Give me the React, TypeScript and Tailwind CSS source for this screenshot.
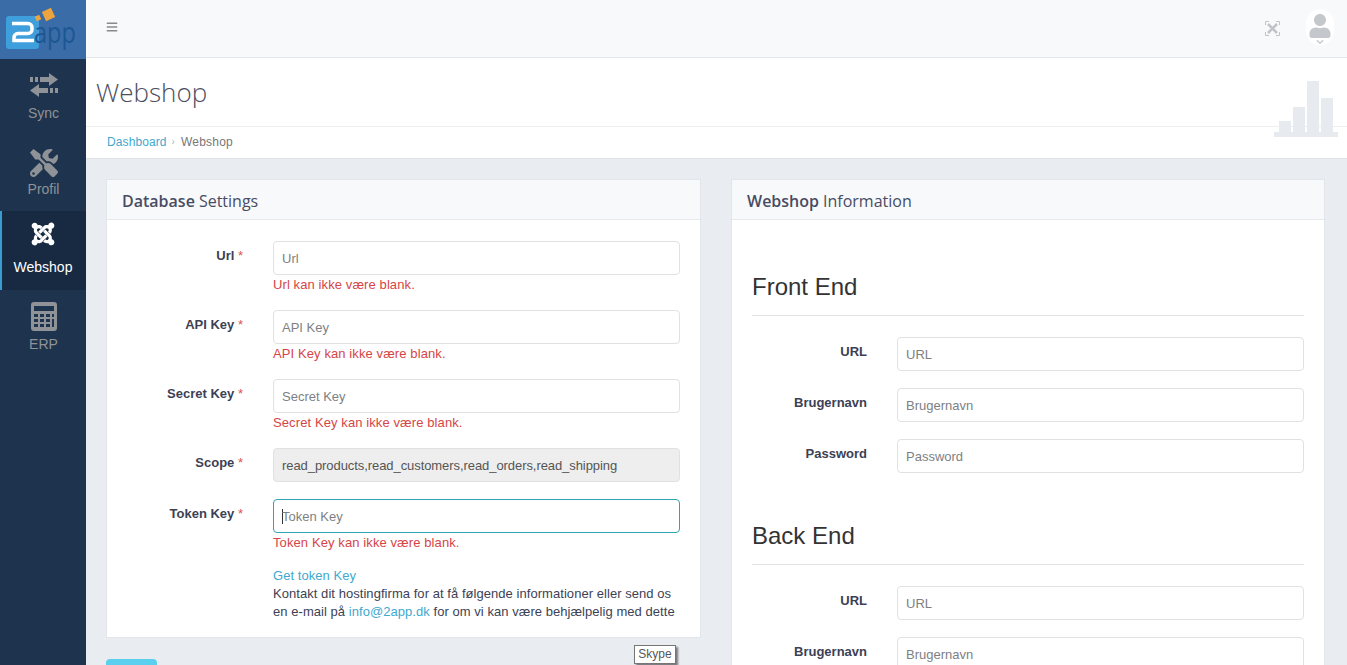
import React from "react";
import { FaBars, FaChevronDown, FaJoomla, FaTools, FaUser } from "react-icons/fa";

const arial = "font-['Liberation_Sans',Arial,sans-serif]";
const open = "font-['Open_Sans',sans-serif]";

function SyncIcon() {
  return (
    <svg width="28" height="26" viewBox="0 0 28 26" fill="#8f9296">
      <rect x="0" y="5" width="3" height="5" />
      <rect x="5" y="5" width="3" height="5" />
      <path d="M10 5h9V1l9 6.500-9 6.500v-4h-9z" />
      <rect x="25" y="16" width="3" height="5" />
      <rect x="20" y="16" width="3" height="5" />
      <path d="M18 16H9v-4l-9 6.500L9 25v-4h9z" />
    </svg>
  );
}

function CalcIcon() {
  return (
    <svg width="26" height="29" viewBox="0 0 26 29" fill="#8f9296">
      <path fillRule="evenodd" d="M3 0h20a3 3 0 0 1 3 3v23a3 3 0 0 1-3 3H3a3 3 0 0 1-3-3V3a3 3 0 0 1 3-3zM3 4v5h20V4zM3 12v3h4v-3zM9 12v3h4v-3zM15 12v3h4v-3zM21 12v3h2v-3zM3 17v3h4v-3zM9 17v3h4v-3zM15 17v3h4v-3zM21 17v8h2v-8zM3 22v3h4v-3zM9 22v3h4v-3zM15 22v3h4v-3z" />
    </svg>
  );
}

function Logo() {
  return (
    <svg width="86" height="59" viewBox="0 0 86 59">
      <rect x="6" y="16" width="33" height="33" rx="3" fill="#3f9fdc" />
      <path d="M12 23.500h16a4 4 0 0 1 4 4v2a4 4 0 0 1-4 4H18a4 4 0 0 0-4 4v3h20" fill="none" stroke="#fff" strokeWidth="3.500" />
      <rect x="35.500" y="15.500" width="5" height="5" fill="#eda33e" transform="rotate(-25 38 18)" />
      <rect x="43.500" y="9.500" width="10" height="10" fill="#eda33e" transform="rotate(-25 48.500 14.500)" />
      <text x="34" y="43" fontFamily="'Open Sans',sans-serif" fontSize="29" textLength="42" lengthAdjust="spacingAndGlyphs" fill="#1d5793">app</text>
    </svg>
  );
}

function FullscreenIcon() {
  return (
    <svg width="15" height="15" viewBox="0 0 15 15" fill="none" stroke="#c0c3c7">
      <path d="M.500 4V.500H4M11 .500h3.500V4M14.500 11v3.500H11M4 14.500H.500V11" />
      <path d="M3 3l9 9M12 3l-9 9" strokeWidth="2.500" />
    </svg>
  );
}

function NavItem({ label, icon, active }: { label: string; icon: React.ReactNode; active?: boolean }) {
  return (
    <div
      className={
        active
          ? "h-[79px] flex flex-col items-center pt-[7px] pr-[2px] bg-[#172a42] border-l-2 border-[#3a9bd0] text-white"
          : "h-[76px] flex flex-col items-center pt-[10px] pl-[1px] text-[#8f9296]"
      }
    >
      <div className="h-[32px] flex items-center justify-center">{icon}</div>
      <span className={active ? `${arial} text-[14px] leading-[20px] mt-[7px]` : `${arial} text-[14px] leading-[20px] mt-[2px]`}>
        {label}
      </span>
    </div>
  );
}

function Field({
  label,
  placeholder,
  error,
  readOnly,
  focused,
}: {
  label: string;
  placeholder: string;
  error?: boolean;
  readOnly?: boolean;
  focused?: boolean;
}) {
  return (
    <div className="flex">
      <div className="w-[136px] shrink-0 text-right pt-[6px] text-[13px] leading-[17px] font-bold text-[#3d3f55]">
        {label} <span className="text-[#d9534f] font-normal">*</span>
      </div>
      <div className="ml-[30px] w-[407px]">
        <div
          className={
            readOnly
              ? "h-[34px] border border-[#dfe1e5] rounded-[4px] bg-[#eeeeee] px-[8px] pt-[1px] flex items-center text-[13px] tracking-[-0.07px] text-[#555555]"
              : focused
                ? "h-[34px] border border-[#2fa4b5] rounded-[4px] bg-white px-[8px] pt-[1px] flex items-center text-[13px] text-[#7d7f84]"
                : "h-[34px] border border-[#dfe1e5] rounded-[4px] bg-white px-[8px] pt-[1px] flex items-center text-[13px] text-[#7d7f84]"
          }
        >
          {focused && <span className="w-px h-[15px] bg-[#333333] -mr-px" />}
          {placeholder}
        </div>
        {error && (
          <div className="mt-[1px] h-[17px] text-[13px] leading-[17px] tracking-[0.1px] text-[#d64545]">
            {label} kan ikke være blank.
          </div>
        )}
      </div>
    </div>
  );
}

function InfoField({ label }: { label: string }) {
  return (
    <div className="flex">
      <div className="w-[115px] shrink-0 text-right pt-[6px] text-[13px] leading-[17px] font-bold text-[#3d3f55]">
        {label}
      </div>
      <div className="ml-[30px] w-[407px] h-[34px] shrink-0 border border-[#dfe1e5] rounded-[4px] bg-white px-[8px] pt-[1px] flex items-center text-[13px] text-[#7d7f84]">
        {label}
      </div>
    </div>
  );
}

function PanelHeader({ strong, rest }: { strong: string; rest: string }) {
  return (
    <div className={`${open} h-[40px] pl-[15px] pt-[2px] bg-[#f8f9fb] border-b border-[#e6e9ee] flex items-center text-[16px] text-[#484c63]`}>
      <span className="font-semibold mr-[4px]">{strong}</span>
      {rest}
    </div>
  );
}

export default function App() {
  return (
    <div className={`${arial} h-[665px] overflow-hidden flex bg-[#e9edf2]`}>
      <aside className="w-[86px] shrink-0 bg-[#1e344e]">
        <div className="h-[59px] bg-[#3a6ca8] overflow-hidden">
          <Logo />
        </div>
        <NavItem label="Sync" icon={<SyncIcon />} />
        <NavItem label="Profil" icon={<FaTools size={28} color="#8f9296" className="mt-[4px]" />} />
        <NavItem label="Webshop" active icon={<FaJoomla size={26} color="#ffffff" />} />
        <NavItem label="ERP" icon={<CalcIcon />} />
      </aside>

      <main className="flex-1 min-w-0">
        <header className="h-[58px] bg-[#f7f9fb] border-b border-[#e4e7eb] flex items-center pl-[20px] pr-[13px]">
          <FaBars size={12} color="#8a8a8a" className="mb-[4px]" />
          <div className="ml-auto flex items-center gap-[26px]">
            <FullscreenIcon />
            <div className="w-[28px] h-[36px] mt-[-4px] rounded-full bg-white flex flex-col items-center relative">
              <FaUser size={24} color="#c4c7cb" className="mt-[5px]" />
              <FaChevronDown size={8} color="#c4c7cb" className="absolute top-[29px]" />
            </div>
          </div>
        </header>

        <div className="relative bg-white border-b border-[#dfe3e8]">
          <div className="h-[69px] border-b border-[#eeeeee] pl-[10px] pt-[16px]">
            <h1 className={`${open} font-light text-[26px] leading-[36px] text-[#4b4e60]`}>Webshop</h1>
          </div>
          <div className="h-[31px] pl-[21px] pb-[2px] flex items-center text-[12px] tracking-[0.1px]">
            <span className="text-[#41a9cf]">Dashboard</span>
            <span className="mx-[5px] text-[10px] text-[#b5b5b5]">›</span>
            <span className="text-[#777777] ml-[1px] tracking-[0.2px]">Webshop</span>
          </div>
          <div className="absolute left-[1188px] top-[23px] w-[64px] h-[56px] flex flex-col justify-end">
            <div className="flex items-end gap-[2px] px-[5px]">
              <div className="w-[12px] h-[11px] bg-[#e7eaef]" />
              <div className="w-[12px] h-[25px] bg-[#e7eaef]" />
              <div className="w-[12px] h-[51px] bg-[#e7eaef]" />
              <div className="w-[12px] h-[34px] bg-[#e7eaef]" />
            </div>
            <div className="h-[5px] bg-[#e7eaef]" />
          </div>
        </div>

        <div className="flex pl-[20px] pt-[20px] gap-[30px]">
          <div className="w-[595px] shrink-0">
            <section className="bg-white border border-[#e2e6ea] h-[459px]">
              <PanelHeader strong="Database" rest="Settings" />
              <div className="pt-[21px] flex flex-col">
                <div className="h-[69px]"><Field label="Url" placeholder="Url" error /></div>
                <div className="h-[69px]"><Field label="API Key" placeholder="API Key" error /></div>
                <div className="h-[69px]"><Field label="Secret Key" placeholder="Secret Key" error /></div>
                <div className="h-[51px]">
                  <Field label="Scope" placeholder="read_products,read_customers,read_orders,read_shipping" readOnly />
                </div>
                <Field label="Token Key" placeholder="Token Key" error focused />
                <div className="ml-[166px] mt-[16px] w-[420px] text-[13px] leading-[18px] tracking-[0.05px] text-[#3d3f55]">
                  <div className="text-[#41a9cf]">Get token Key</div>
                  <div>Kontakt dit hostingfirma for at få følgende informationer eller send os</div>
                  <div>
                    en e-mail på <span className="text-[#41a9cf]">info@2app.dk</span> for om vi kan være behjælpelig med dette
                  </div>
                </div>
              </div>
            </section>
            <div className="mt-[21px] w-[51px] h-[20px] rounded-t-[4px] bg-[#5bd0ee]" />
          </div>

          <section className="w-[594px] shrink-0 bg-white border border-[#e2e6ea] h-[600px]">
            <PanelHeader strong="Webshop" rest="Information" />
            <div className="px-[20px]">
              <h2 className="mt-[50px] h-[46px] border-b border-[#dfe3e6] text-[24px] leading-[33px] text-[#333333]">Front End</h2>
              <div className="mt-[21px] flex flex-col gap-[17px]">
                <InfoField label="URL" />
                <InfoField label="Brugernavn" />
                <InfoField label="Password" />
              </div>
              <h2 className="mt-[46px] h-[46px] border-b border-[#dfe3e6] text-[24px] leading-[33px] text-[#333333]">Back End</h2>
              <div className="mt-[21px] flex flex-col gap-[17px]">
                <InfoField label="URL" />
                <InfoField label="Brugernavn" />
              </div>
            </div>
          </section>
        </div>
      </main>

      <div className="absolute left-[634px] top-[645px] w-[42px] h-[19px] bg-white border border-[#767676] shadow-[2px_2px_2px_rgba(0,0,0,0.5)] text-[12px] leading-[17px] text-center text-[#575757]">
        Skype
      </div>
    </div>
  );
}
